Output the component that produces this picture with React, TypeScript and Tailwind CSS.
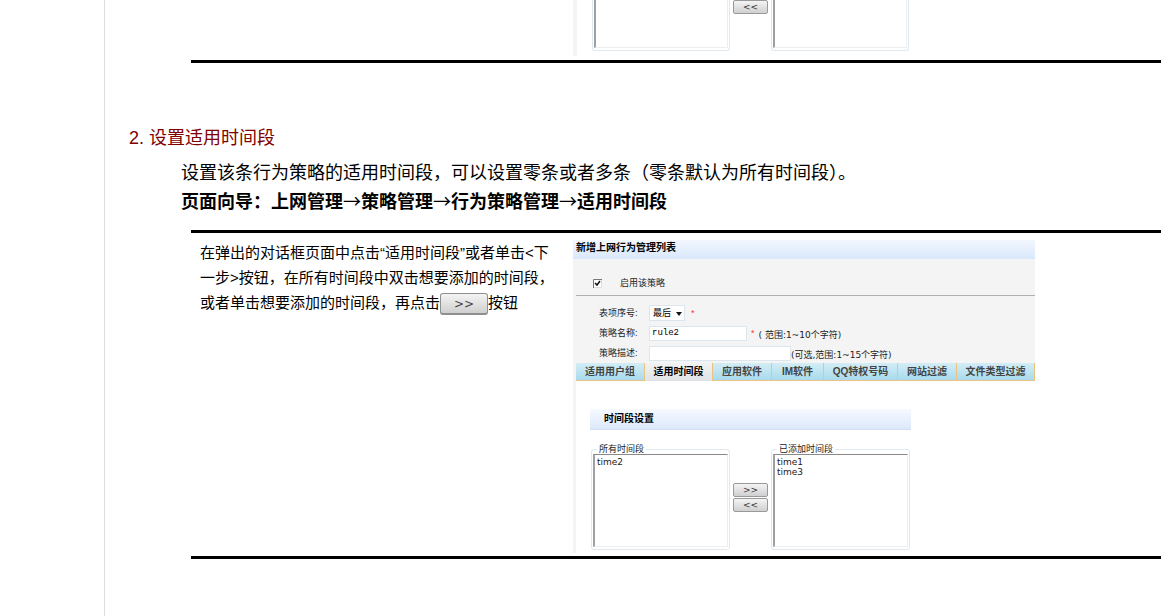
import { Fragment, type ReactNode } from 'react';

const tabs = [
  { label: '适用用户组', width: 'w-[69px]' },
  { label: '适用时间段', width: 'w-[68px]' },
  { label: '应用软件', width: 'w-[59px]' },
  { label: 'IM软件', width: 'w-[52px]' },
  { label: 'QQ特权号码', width: 'w-[74px]' },
  { label: '网站过滤', width: 'w-[59px]' },
  { label: '文件类型过滤', width: 'w-[78px]' },
];

const activeTab = '适用时间段';

const guide = ['上网管理', '策略管理', '行为策略管理', '适用时间段'];

export default function App() {
  return (
    <div
      lang="zh-CN"
      className="flex h-screen overflow-hidden bg-white font-['Liberation_Sans','Noto_Sans_CJK_SC',sans-serif] text-black"
    >
      <main className="ml-[104px] min-w-0 flex-1 border-l border-[#dddddd]">
        <section className="ml-[86px] border-b-[3px] border-black pb-1">
          <div className="ml-[382px] flex items-end border-l-[4px] border-[#f4f4f4] pb-[5px] pl-[15px] text-[9px]">
            <TimeList id="previous-all" label="所有时间段" items={[]} />
            <div className="mx-[3px] mb-[38px] h-[13px]">
              <MoveButton>&lt;&lt;</MoveButton>
            </div>
            <TimeList id="previous-added" label="已添加时间段" items={[]} />
          </div>
        </section>

        <h2 className="mt-[62px] ml-6 text-lg leading-[26px] text-[#800000]">2. 设置适用时间段</h2>
        <div className="mt-2 ml-[76px] text-lg leading-[29px] whitespace-nowrap">
          <p>设置该条行为策略的适用时间段，可以设置零条或者多条（零条默认为所有时间段）。</p>
          <p className="font-bold">
            页面向导：
            {guide.map((step, index) => (
              <Fragment key={step}>
                {index > 0 && (
                  <span className="font-['Noto_Sans_CJK_SC',sans-serif] leading-none font-normal">
                    →
                  </span>
                )}
                {step}
              </Fragment>
            ))}
          </p>
        </div>

        <section className="mt-[13px] ml-[86px] flex items-start border-y-[3px] border-black pt-[7px] pb-[3px]">
          <p className="w-[382px] shrink-0 pr-[13px] pl-[9px] text-[15px] leading-[25px]">
            在弹出的对话框页面中点击“适用时间段”或者单击&lt;下一步&gt;按钮，在所有时间段中双击想要添加的时间段，或者单击想要添加的时间段，再点击
            <button
              type="button"
              className="h-[22px] w-12 rounded-[3px] border border-b-2 border-[#8e8f8f] bg-linear-to-b from-[#f4f4f4] to-[#cfcfcf] align-middle font-['DejaVu_Sans',sans-serif] text-xs leading-[18px] text-[#444444]"
            >
              &gt;&gt;
            </button>
            按钮
          </p>
          <PolicyDialog />
        </section>
      </main>
    </div>
  );
}

function PolicyDialog() {
  return (
    <form className="w-[462px] shrink-0 border-l-[3px] border-[#f4f4f4] text-[9px] leading-3 text-[#222222]">
      <header className="-ml-[3px] h-[19px] bg-linear-to-b from-[#f3f7fe] to-[#d9e8fb] pl-[3px] text-[10px] leading-[15px] font-bold text-black">
        新增上网行为管理列表
      </header>

      <div className="bg-[#f4f4f4]">
        <label className="flex h-[37px] items-center border-b border-[#b0b0b0] pt-3 pl-[17px]">
          <input type="checkbox" defaultChecked className="peer sr-only" />
          <svg viewBox="0 0 9 9" className="mr-[18px] size-[9px]" aria-hidden="true">
            <rect width="9" height="9" fill="#fff" />
            <path d="M.5 9V.5H9" fill="none" stroke="#777" />
            <path d="M8.5 1v7.5H1" fill="none" stroke="#ddd" />
            <path d="M2 4l2 2 3-4" fill="none" stroke="#111" strokeWidth="1.5" />
          </svg>
          启用该策略
        </label>

        <div className="flex h-[67px] flex-col pt-[9px]">
          <FieldRow id="order" label="表项序号:" height="h-4">
            <span className="relative mr-0.5">
              <select
                id="order"
                className="block h-4 w-9 appearance-none border border-[#dce6ee] bg-white pl-[3px] text-[9px] leading-3 text-black"
              >
                <option>最后</option>
              </select>
              <svg
                viewBox="0 0 6 4"
                className="pointer-events-none absolute top-[7px] right-[3px] h-1 w-1.5"
                aria-hidden="true"
              >
                <path d="M0 0h6L3 4z" fill="#111" />
              </svg>
            </span>
            <Required />
          </FieldRow>
          <FieldRow id="name" label="策略名称:" height="h-6">
            <input
              id="name"
              defaultValue="rule2"
              className="h-[15px] w-[98px] border border-[#dce6ee] bg-white px-0.5 font-['Liberation_Mono',monospace] text-[9px] text-black"
            />
            <Required />
            <Hint>( 范围:1~10个字符)</Hint>
          </FieldRow>
          <FieldRow id="description" label="策略描述:" height="h-4">
            <input
              id="description"
              className="h-[15px] w-[142px] border border-[#dce6ee] bg-white px-0.5 text-[9px]"
            />
            <Hint>(可选,范围:1~15个字符)</Hint>
          </FieldRow>
        </div>
      </div>

      <nav className="flex h-[18px] text-[10px] leading-4 font-bold">
        {tabs.map((tab) => (
          <button
            key={tab.label}
            type="button"
            className={`${tab.width} shrink-0 whitespace-nowrap border-r border-[#e8c382] text-center ${
              tab.label === activeTab
                ? 'bg-linear-to-b from-[#f1f2f3] to-[#dfe3e6] text-black'
                : 'border-b bg-linear-to-b from-[#d3edf5] to-[#a9daed] text-[#444444]'
            }`}
          >
            {tab.label}
          </button>
        ))}
      </nav>

      <div className="pt-7 pb-[3px] pl-[14px]">
        <h3 className="h-[21px] w-[321px] border-b border-[#cfe0f5] bg-linear-to-b from-[#f7faff] to-[#dce8fb] pl-[14px] text-[10px] leading-[19px] font-bold text-black">
          时间段设置
        </h3>
        <div className="mt-[14px] ml-px flex items-end">
          <TimeList id="current-all" label="所有时间段" items={['time2']} showLegend />
          <div className="mx-[3px] mb-[38px] flex flex-col gap-px">
            <MoveButton>&gt;&gt;</MoveButton>
            <MoveButton>&lt;&lt;</MoveButton>
          </div>
          <TimeList
            id="current-added"
            label="已添加时间段"
            items={['time1', 'time3']}
            showLegend
          />
        </div>
      </div>
    </form>
  );
}

function FieldRow({
  id,
  label,
  height,
  children,
}: {
  id: string;
  label: string;
  height: string;
  children: ReactNode;
}) {
  return (
    <div className={`flex items-center whitespace-nowrap ${height}`}>
      <label htmlFor={id} className="w-[73px] pl-[23px]">
        {label}
      </label>
      {children}
    </div>
  );
}

function Required() {
  return <span className="mx-1 text-[#ff3333]">*</span>;
}

function Hint({ children }: { children: ReactNode }) {
  return (
    <span className="mt-1 font-['DejaVu_Sans','Noto_Sans_CJK_SC',sans-serif]">{children}</span>
  );
}

function TimeList({
  id,
  label,
  items,
  showLegend = false,
}: {
  id: string;
  label: string;
  items: string[];
  showLegend?: boolean;
}) {
  return (
    <fieldset
      className={`rounded-[3px] border border-[#dfe8ee] px-px pb-0.5 ${
        showLegend ? 'w-[139px]' : 'w-[138px] rounded-t-none border-t-0'
      }`}
    >
      {showLegend && (
        <legend className="ml-1 px-0.5 leading-[10px] text-[#222222]">{label}</legend>
      )}
      <select
        id={id}
        aria-label={label}
        multiple
        className={`block w-full appearance-none overflow-hidden border-r border-b border-l-2 border-t-[#8a8a8a] border-r-[#eeeeee] border-b-[#eeeeee] border-l-[#a0a0a0] bg-white pt-0.5 font-['DejaVu_Sans',sans-serif] text-[9px] text-[#222222] ${
          showLegend ? 'h-[93px] border-t' : 'h-12'
        }`}
      >
        {items.map((item) => (
          <option key={item} className="h-2.5 min-h-0 p-0 pl-0.5 leading-[10px]">
            {item}
          </option>
        ))}
      </select>
    </fieldset>
  );
}

function MoveButton({ children }: { children: ReactNode }) {
  return (
    <button
      type="button"
      className="block h-3.5 w-[35px] rounded-[2px] border border-[#999999] bg-linear-to-b from-[#f4f4f4] to-[#d0d0d0] font-['DejaVu_Sans',sans-serif] text-[9px] leading-3 text-[#333333]"
    >
      {children}
    </button>
  );
}
